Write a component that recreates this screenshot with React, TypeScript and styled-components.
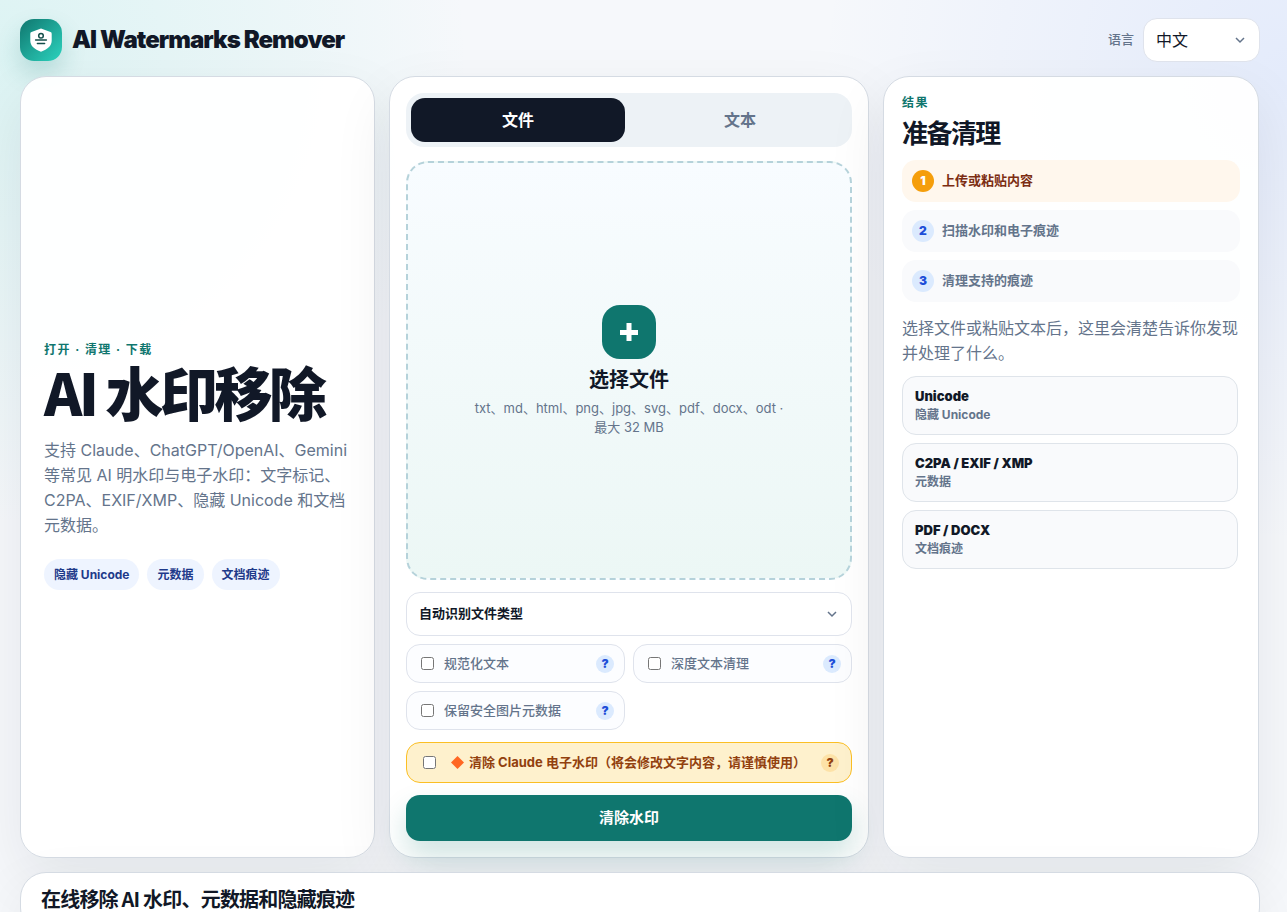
import React, { useState } from 'react';
import styled, { createGlobalStyle } from 'styled-components';

const sans = `Inter, "Noto Sans CJK SC", sans-serif`;
const display = `"Noto Sans CJK SC", Inter, sans-serif`;

const GlobalStyle = createGlobalStyle`
  *, *::before, *::after { box-sizing: border-box; }
  html { scrollbar-width: none; }
  body {
    margin: 0;
    min-height: 100vh;
    color: #111827;
    font-family: ${sans};
    font-size: 16px;
    line-height: 1.5;
    background:
      radial-gradient(circle at 0% 6%, rgba(45, 212, 191, 0.13), transparent 30%),
      radial-gradient(circle at 100% 8%, rgba(80, 130, 255, 0.11), transparent 30%),
      #f6f8fb;
  }
  button, input, select { font-family: inherit; line-height: inherit; }
  h1, h2, p, ul, ol { margin: 0; padding: 0; }
`;

const Page = styled.div`
  display: flex;
  flex-direction: column;
  gap: 14px;
  padding: 18px 27px 18px 20px;
`;

const Header = styled.header`
  display: flex;
  align-items: center;
  justify-content: space-between;
  height: 44px;
`;

const Brand = styled.a`
  display: flex;
  align-items: center;
  gap: 10px;
  color: #111827;
  font-size: 24px;
  font-weight: 900;
  letter-spacing: -0.04em;
  text-decoration: none;
`;

const Logo = styled.span`
  display: grid;
  place-items: center;
  width: 42px;
  height: 42px;
  border-radius: 14px;
  background: linear-gradient(135deg, #0f766e, #2dd4bf);
  box-shadow: 0 12px 24px rgba(15, 118, 110, 0.2);
`;

const Language = styled.label`
  display: flex;
  align-items: center;
  gap: 9px;
  color: #64748b;
  font-size: 13px;
  font-weight: 500;
`;

const SelectWrap = styled.span`
  position: relative;
  display: block;
  svg {
    position: absolute;
    top: 50%;
    right: 13px;
    transform: translateY(-50%);
    pointer-events: none;
  }
`;

const Select = styled.select<{ $compact?: boolean }>`
  appearance: none;
  display: block;
  width: ${(p) => (p.$compact ? '117px' : '100%')};
  height: 44px;
  padding: 0 36px 0 12px;
  border: 1px solid #dfe3ec;
  border-radius: 14px;
  background: #fff;
  color: #111827;
  font-size: ${(p) => (p.$compact ? '16px' : '13px')};
  font-weight: ${(p) => (p.$compact ? 400 : 700)};
`;

const Workspace = styled.main`
  display: grid;
  grid-template-columns: minmax(0, 355fr) minmax(0, 480fr) minmax(0, 376fr);
  gap: 14px;
  min-height: calc(100vh - 130px);
  margin-right: 1px;
`;

const Panel = styled.section`
  display: flex;
  flex-direction: column;
  border: 1px solid #d5dbe3;
  border-radius: 26px;
  background: rgba(255, 255, 255, 0.95);
  box-shadow: 0 22px 60px rgba(15, 23, 42, 0.08);
`;

const Intro = styled(Panel)`
  justify-content: center;
  padding: 24px 23px 27px;
`;

const Tool = styled(Panel)`
  padding: 16px;
`;

const Result = styled(Panel)`
  padding: 17px 18px;
`;

const Eyebrow = styled.p`
  color: #0f766e;
  font-size: 12px;
  line-height: 18px;
  font-weight: 700;
  letter-spacing: 0.12em;
`;

const Title = styled.h1`
  margin: 3px 0 18px;
  font-family: ${display};
  font-size: 58px;
  line-height: 58px;
  font-weight: 800;
  letter-spacing: -0.06em;
`;

const Lead = styled.p`
  color: #64748b;
  font-size: 16px;
  line-height: 25px;
`;

const Chips = styled.ul`
  display: flex;
  flex-wrap: wrap;
  gap: 8px;
  margin-top: 21px;
  list-style: none;
`;

const Chip = styled.li`
  padding: 7px 10px;
  border-radius: 16px;
  background: #eef4ff;
  color: #1e3a8a;
  font-size: 12px;
  line-height: 17px;
  font-weight: 700;
`;

const Tabs = styled.div`
  display: grid;
  grid-template-columns: 1fr 1fr;
  gap: 8px;
  padding: 5px;
  border-radius: 18px;
  background: #edf2f6;
`;

const Tab = styled.button<{ $active: boolean }>`
  height: 44px;
  border: 0;
  border-radius: 14px;
  background: ${(p) => (p.$active ? '#111827' : 'transparent')};
  color: ${(p) => (p.$active ? '#fff' : '#64748b')};
  font-size: 16px;
  font-weight: 700;
  cursor: pointer;
`;

const DropZone = styled.label`
  position: relative;
  display: flex;
  flex: 1;
  flex-direction: column;
  align-items: center;
  justify-content: center;
  min-height: 260px;
  margin: 14px 0 12px;
  border: 2px dashed #b5d2da;
  border-radius: 22px;
  background: linear-gradient(180deg, #f8fcff, #ecf7f5);
  cursor: pointer;
`;

const HiddenFile = styled.input`
  position: absolute;
  inset: 0;
  opacity: 0;
  cursor: pointer;
`;

const PlusTile = styled.span`
  display: grid;
  place-items: center;
  width: 54px;
  height: 54px;
  border-radius: 18px;
  background: #0f766e;
`;

const DropTitle = styled.strong`
  margin: 8px 0 6px;
  font-size: 20px;
  line-height: 26px;
  font-weight: 700;
`;

const DropHint = styled.span`
  max-width: 320px;
  color: #64748b;
  font-size: 13px;
  line-height: 19px;
  text-align: center;
`;

const Options = styled.div`
  display: grid;
  grid-template-columns: 1fr 1fr;
  gap: 8px;
  margin: 8px 0 12px;
`;

const Option = styled.div<{ $warning?: boolean }>`
  display: flex;
  align-items: center;
  height: ${(p) => (p.$warning ? '41px' : '39px')};
  padding: 0 ${(p) => (p.$warning ? '12px 0 16px' : '10px 0 14px')};
  border: 1px solid ${(p) => (p.$warning ? '#fbbf24' : '#dfe3ec')};
  border-radius: 14px;
  background: ${(p) => (p.$warning ? '#fef1cd' : '#fcfdff')};
  color: ${(p) => (p.$warning ? '#92400e' : '#64748b')};
`;

const OptionLabel = styled.label<{ $wide?: boolean }>`
  display: flex;
  flex: 1;
  align-items: center;
  gap: ${(p) => (p.$wide ? '15px' : '10px')};
  font-size: 13px;
  font-weight: ${(p) => (p.$wide ? 700 : 500)};
  input { width: 13px; height: 13px; margin: 0; }
`;

const WarningText = styled.span`
  display: flex;
  align-items: center;
  gap: 5px;
`;

const Help = styled.button<{ $warning?: boolean }>`
  display: grid;
  place-items: center;
  width: 18px;
  height: 18px;
  padding: 0;
  border: 0;
  border-radius: 50%;
  background: ${(p) => (p.$warning ? '#fde2a7' : '#dbeafe')};
  color: ${(p) => (p.$warning ? '#92400e' : '#1d4ed8')};
  font-size: 12px;
  font-weight: 900;
`;

const Submit = styled.button`
  height: 46px;
  margin-top: 12px;
  border: 0;
  border-radius: 14px;
  background: #0f766e;
  box-shadow: 0 14px 28px rgba(15, 118, 110, 0.2);
  color: #fff;
  font-size: 15px;
  font-weight: 700;
  cursor: pointer;
`;

const ResultTitle = styled.h2`
  margin: 2px 0 10px;
  font-family: ${display};
  font-size: 26px;
  line-height: 36px;
  font-weight: 700;
  letter-spacing: -0.06em;
`;

const Steps = styled.ol`
  display: grid;
  gap: 8px;
  margin-bottom: 14px;
  list-style: none;
`;

const Step = styled.li<{ $current?: boolean }>`
  display: flex;
  align-items: center;
  gap: 8px;
  height: 42px;
  padding: 0 10px;
  border-radius: 14px;
  background: ${(p) => (p.$current ? '#fff7ed' : '#f9fafc')};
  color: ${(p) => (p.$current ? '#7c2d12' : '#64748b')};
  font-size: 13px;
  font-weight: 700;
`;

const StepNumber = styled.span<{ $current?: boolean }>`
  display: grid;
  place-items: center;
  width: 22px;
  height: 22px;
  border-radius: 50%;
  background: ${(p) => (p.$current ? '#f59e0b' : '#dbeafe')};
  color: ${(p) => (p.$current ? '#fff' : '#1d4ed8')};
  font-size: 12px;
  font-weight: 900;
`;

const Findings = styled.ul`
  display: grid;
  gap: 8px;
  margin: 10px 2px 0 0;
  list-style: none;
`;

const Finding = styled.li`
  display: flex;
  flex-direction: column;
  gap: 1px;
  height: 59px;
  padding: 10px 12px;
  border: 1px solid #dfe4ea;
  border-radius: 14px;
  background: #f9fafc;
  color: #64748b;
  font-size: 12px;
  line-height: 18px;
  font-weight: 700;
  strong {
    color: #111827;
    font-size: 13px;
    font-weight: 900;
  }
`;

const About = styled(Panel)`
  padding: 12px 20px 20px;
  background: #fff;
`;

const AboutTitle = styled.h2`
  font-family: ${display};
  font-size: 20px;
  line-height: 28px;
  font-weight: 700;
  letter-spacing: -0.04em;
`;

const Chevron = () => (
  <svg width="14" height="14" viewBox="0 0 14 14" fill="none" stroke="#64748b" strokeWidth="1.5" aria-hidden="true">
    <path d="M3 5l4 4 4-4" />
  </svg>
);

const ShieldMark = () => (
  <svg width="26" height="26" viewBox="0 0 26 26" fill="none" aria-hidden="true">
    <path
      d="M13 1.5l9.5 3.6c.8.3 1.2.8 1.2 1.6v7.1c0 5.2-4.2 8.6-10.7 11C6.5 22.4 2.3 19 2.3 13.8V6.7c0-.8.4-1.3 1.2-1.6z"
      fill="#fff"
    />
    <circle cx="13" cy="8.7" r="2.3" stroke="#134e4a" strokeWidth="1.5" />
    <path d="M7.6 13h10.8M9.4 16.6h7.2" stroke="#134e4a" strokeWidth="1.5" strokeLinecap="round" />
  </svg>
);

const Plus = () => (
  <svg width="18" height="18" viewBox="0 0 18 18" aria-hidden="true">
    <path d="M6.5 0h5v7H18v5h-6.5v6h-5v-6H0V7h6.5z" fill="#fff" />
  </svg>
);

const Diamond = () => (
  <svg width="13" height="13" viewBox="0 0 13 13" aria-hidden="true">
    <path d="M6.5 0L13 6.5L6.5 13L0 6.5z" fill="#ff6723" />
  </svg>
);

const options = ['规范化文本', '深度文本清理', '保留安全图片元数据'];
const steps = ['上传或粘贴内容', '扫描水印和电子痕迹', '清理支持的痕迹'];
const findings = [
  ['Unicode', '隐藏 Unicode'],
  ['C2PA / EXIF / XMP', '元数据'],
  ['PDF / DOCX', '文档痕迹'],
];

export default function App() {
  const [tab, setTab] = useState('文件');
  return (
    <>
      <GlobalStyle />
      <Page>
        <Header>
          <Brand href="#">
            <Logo><ShieldMark /></Logo>
            AI Watermarks Remover
          </Brand>
          <Language>
            语言
            <SelectWrap>
              <Select $compact defaultValue="zh">
                <option value="zh">中文</option>
                <option value="en">English</option>
              </Select>
              <Chevron />
            </SelectWrap>
          </Language>
        </Header>

        <Workspace>
          <Intro>
            <Eyebrow>打开 · 清理 · 下载</Eyebrow>
            <Title>AI 水印移除</Title>
            <Lead>
              支持 Claude、ChatGPT/OpenAI、Gemini 等常见 AI 明水印与电子水印：文字标记、C2PA、EXIF/XMP、隐藏 Unicode 和文档元数据。
            </Lead>
            <Chips>
              <Chip>隐藏 Unicode</Chip>
              <Chip>元数据</Chip>
              <Chip>文档痕迹</Chip>
            </Chips>
          </Intro>

          <Tool>
            <Tabs role="tablist">
              {['文件', '文本'].map((name) => (
                <Tab key={name} type="button" role="tab" aria-selected={tab === name} $active={tab === name} onClick={() => setTab(name)}>
                  {name}
                </Tab>
              ))}
            </Tabs>
            <DropZone>
              <HiddenFile type="file" />
              <PlusTile><Plus /></PlusTile>
              <DropTitle>选择文件</DropTitle>
              <DropHint>txt、md、html、png、jpg、svg、pdf、docx、odt · 最大 32 MB</DropHint>
            </DropZone>
            <SelectWrap>
              <Select aria-label="文件类型" defaultValue="auto">
                <option value="auto">自动识别文件类型</option>
              </Select>
              <Chevron />
            </SelectWrap>
            <Options>
              {options.map((name) => (
                <Option key={name}>
                  <OptionLabel><input type="checkbox" />{name}</OptionLabel>
                  <Help type="button">?</Help>
                </Option>
              ))}
            </Options>
            <Option $warning>
              <OptionLabel $wide>
                <input type="checkbox" />
                <WarningText><Diamond />清除 Claude 电子水印（将会修改文字内容，请谨慎使用）</WarningText>
              </OptionLabel>
              <Help type="button" $warning>?</Help>
            </Option>
            <Submit type="button">清除水印</Submit>
          </Tool>

          <Result>
            <Eyebrow>结果</Eyebrow>
            <ResultTitle>准备清理</ResultTitle>
            <Steps>
              {steps.map((name, i) => (
                <Step key={name} $current={i === 0}>
                  <StepNumber $current={i === 0}>{i + 1}</StepNumber>
                  {name}
                </Step>
              ))}
            </Steps>
            <Lead>选择文件或粘贴文本后，这里会清楚告诉你发现并处理了什么。</Lead>
            <Findings>
              {findings.map(([name, detail]) => (
                <Finding key={name}>
                  <strong>{name}</strong>
                  {detail}
                </Finding>
              ))}
            </Findings>
          </Result>
        </Workspace>

        <About>
          <AboutTitle>在线移除 AI 水印、元数据和隐藏痕迹</AboutTitle>
        </About>
      </Page>
    </>
  );
}
